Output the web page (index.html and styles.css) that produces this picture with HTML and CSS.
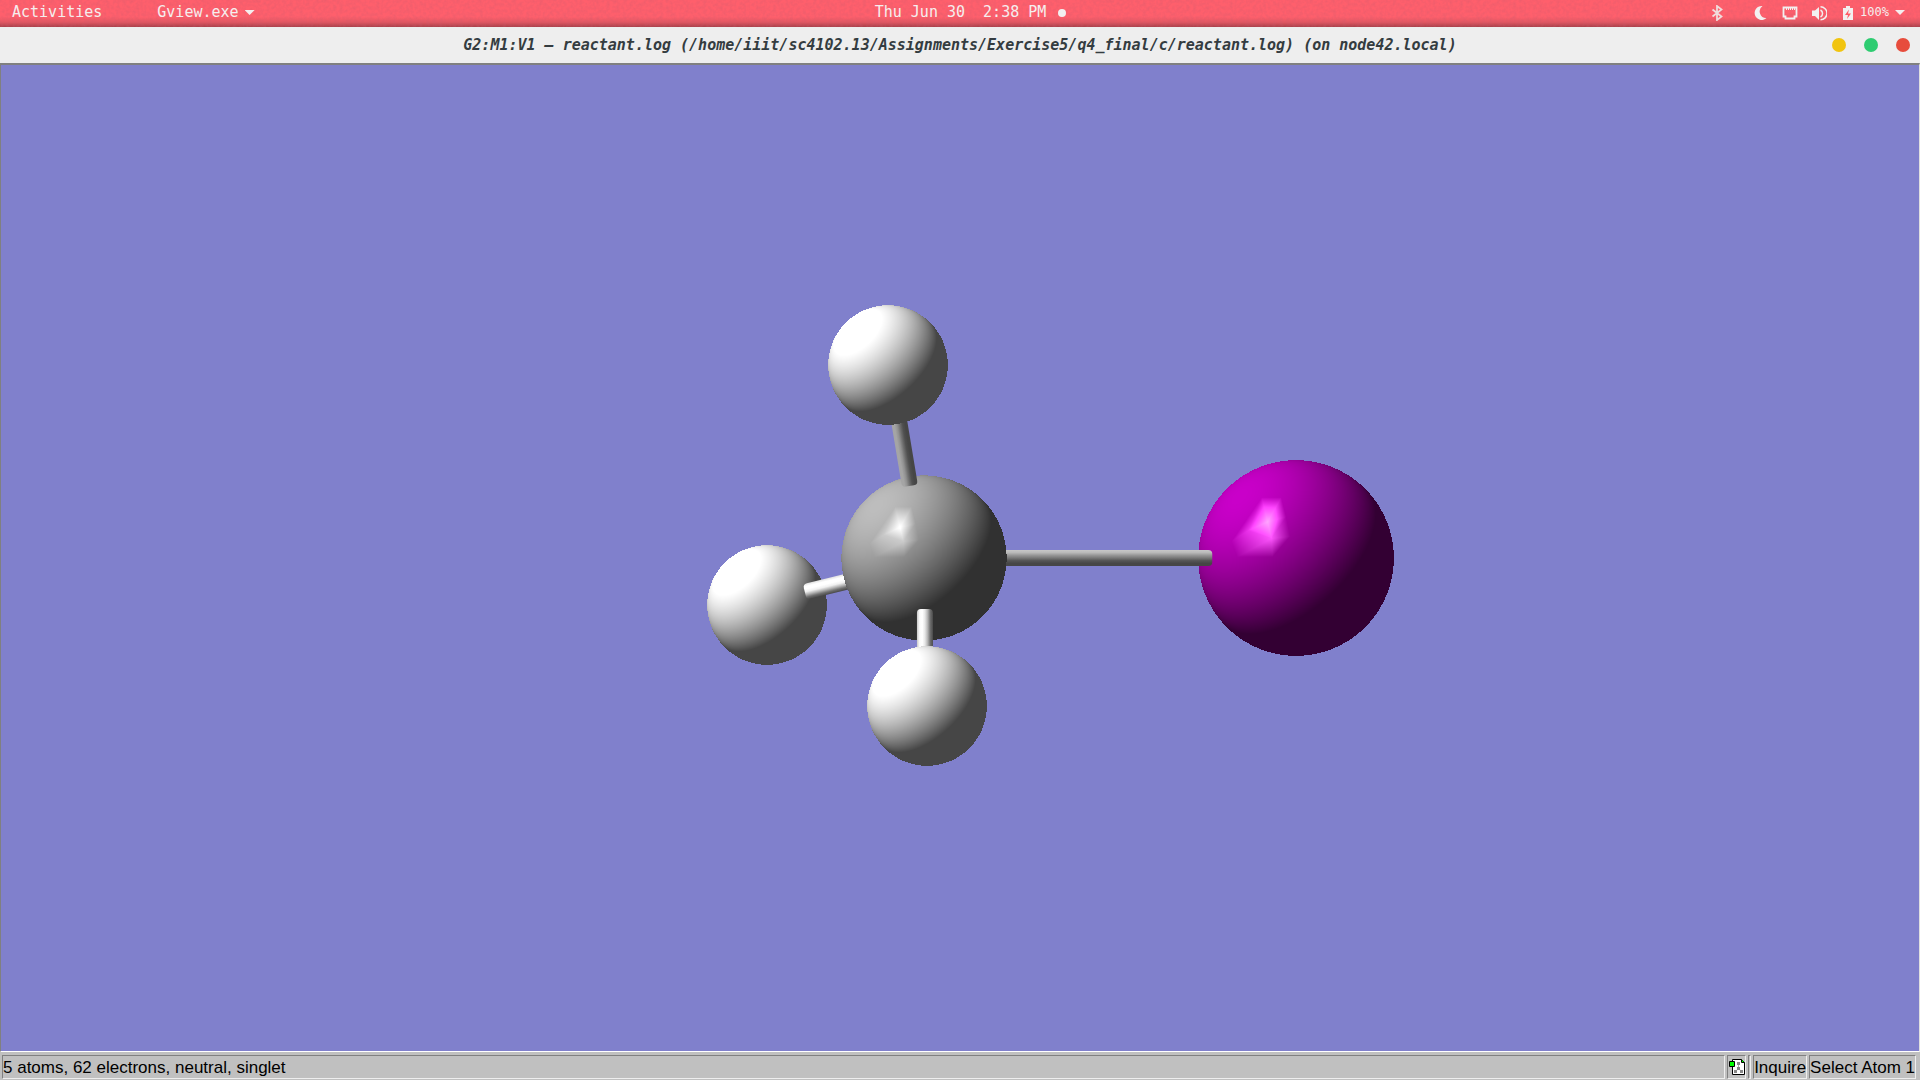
FILE: index.html
```html
<!DOCTYPE html>
<html lang="en">
<head>
<meta charset="utf-8">
<title>G2:M1:V1 – reactant.log</title>
<link rel="stylesheet" href="styles.css">
</head>
<body>
<header class="panel">
  <svg class="panel-grain" aria-hidden="true">
    <filter id="grain" x="0" y="0" width="100%" height="100%">
      <feTurbulence type="fractalNoise" baseFrequency="0.3" numOctaves="2" seed="4"/>
      <feColorMatrix values="0 0 0 0 0.6  0 0 0 0 0.1  0 0 0 0 0.15  0.6 0 0 0 -0.2"/>
    </filter>
    <rect width="100%" height="100%" filter="url(#grain)"/>
  </svg>
  <nav class="panel-side">
    <button class="panel-item">Activities</button>
    <button class="panel-item">Gview.exe<span class="caret"></span></button>
  </nav>
  <button class="panel-item clock">Thu Jun 30&nbsp; 2:38 PM<span class="dot"></span></button>
  <div class="panel-side tray">
    <svg class="tray-icon bluetooth" viewBox="0 0 16 16" aria-label="Bluetooth"><path d="M3.500 4.500l9 7-4.500 3.500v-14l4.500 3.500-9 7" fill="none" stroke="#f0dcdc" stroke-width="1.800"/></svg>
    <svg class="tray-icon" viewBox="0 0 16 16" aria-label="Night mode"><path d="M9.500 1A7 7 0 1 0 13.500 13 6.600 6.600 0 0 1 9.500 1z" fill="#f2f0f0"/></svg>
    <svg class="tray-icon" viewBox="0 0 16 16" aria-label="Wired network"><path d="M1.500 2.500h13v9h-2v2h-9v-2h-2z" fill="none" stroke="#f2f0f0" stroke-width="1.800"/><path d="M4.500 2v3M6.500 2v3M8.500 2v3M10.500 2v3M12.500 2v3" stroke="#f2f0f0"/></svg>
    <svg class="tray-icon" viewBox="0 0 16 16" aria-label="Volume"><path d="M1 5.500h3L8 2v13l-4-4H1z" fill="#f2f0f0"/><path d="M9.500 5a4 4 0 0 1 0 7M9.500 1.800a6.500 6.500 0 0 1 0 13" fill="none" stroke="#f2f0f0" stroke-width="1.500"/></svg>
    <svg class="tray-icon" viewBox="0 0 16 16" aria-label="Battery charging"><path d="M3 3h3V1h4v2h3v12H3z" fill="#f2f0f0"/><path d="M9 4.500L5 10h3l-1 4 4-5.500H8z" fill="#ff5a66"/></svg>
    <span class="battery">100%</span><span class="caret"></span>
  </div>
</header>

<main class="window">
  <div class="titlebar">
    <h1 class="title">G2:M1:V1 – reactant.log (/home/iiit/sc4102.13/Assignments/Exercise5/q4_final/c/reactant.log) (on node42.local)</h1>
    <div class="window-buttons">
      <button class="window-button minimize" aria-label="Minimize"></button>
      <button class="window-button maximize" aria-label="Maximize"></button>
      <button class="window-button close" aria-label="Close"></button>
    </div>
  </div>
  <div class="view"><canvas class="molecule" role="img" aria-label="Ball and stick model of iodomethane"></canvas></div>
  <footer class="statusbar">
    <span class="cell summary">5 atoms, 62 electrons, neutral, singlet</span>
    <button class="cell icon-cell" aria-label="Molecule file">
      <svg class="file-icon" viewBox="0 0 16 18"><path d="M3.500 1.500h9l3 3v12h-12z" fill="#fff" stroke="#000"/><path d="M12.500 1.500v3h3" fill="#0f0" stroke="#000"/><path d="M9.500 5v6M9.500 10l-3 4M9.500 10l3 4" stroke="#aaa"/><path d="M8 4h3v3H8zM8 9h3v3H8zM5 12h3v3H5zM11 12h3v3h-3z" fill="#888"/><path d="M.5 3.500h5v5h-5z" fill="#0f0" stroke="#000"/></svg>
    </button>
    <span class="cell sliver"></span>
    <span class="cell">Inquire</span>
    <span class="cell mode">Select Atom 1</span>
  </footer>
</main>
<script src="molecule.js"></script>
</body>
</html>
```
FILE: styles.css
```css
* { box-sizing: border-box; }
html, body { height: 100%; }
body {
  margin: 0;
  display: flex;
  flex-direction: column;
  overflow: hidden;
  background: #c0c0c0;
}
button {
  border: 0;
  padding: 0;
  background: none;
  color: inherit;
  font: inherit;
}
.panel {
  position: relative;
  flex: none;
  display: flex;
  align-items: center;
  height: 27px;
  padding: 0 12px 2px;
  background: linear-gradient(#ff5f6c 0, #ff5f6c 62%, #e25762 82%, #a8404a 100%);
  color: #f5eeee;
  font: 15px/25px "DejaVu Sans Mono", monospace;
}
.panel-grain {
  position: absolute;
  inset: 0;
  width: 100%;
  height: 100%;
}
.panel-side {
  position: relative;
  flex: 1;
  display: flex;
  align-items: center;
  gap: 55px;
}
.panel-item {
  position: relative;
  display: flex;
  align-items: center;
}
.caret {
  width: 10px;
  height: 5px;
  margin-left: 6px;
  background: #f5eeee;
  clip-path: polygon(0 0, 100% 0, 50% 100%);
}
.clock { padding-left: 24px; }
.dot {
  width: 8px;
  height: 8px;
  margin-left: 12px;
  border-radius: 50%;
  background: #f2f0f0;
}
.tray {
  justify-content: flex-end;
  gap: 13px;
  padding-right: 3px;
}
.tray-icon {
  width: 16px;
  height: 16px;
}
.bluetooth { margin-right: 15px; }
.battery {
  font-size: 12px;
  margin-left: -9px;
}
.tray .caret { margin-left: -7px; }
.window {
  flex: 1;
  min-height: 0;
  display: flex;
  flex-direction: column;
}
.titlebar {
  flex: none;
  display: grid;
  grid-template-columns: 1fr auto 1fr;
  align-items: center;
  height: 36px;
  padding: 0 10px;
  background: #eee;
}
.title {
  grid-column: 2;
  margin: 0;
  color: #343c40;
  font: italic bold 15px/36px "DejaVu Sans Mono", monospace;
  white-space: nowrap;
}
.window-buttons {
  display: flex;
  justify-content: flex-end;
  gap: 18px;
}
.window-button {
  width: 14px;
  height: 14px;
  border-radius: 50%;
}
.minimize { background: #f1c40f; }
.maximize { background: #2ecc71; }
.close { background: #e74c3c; }
.view {
  flex: 1;
  min-height: 0;
  border: solid #808080;
  border-width: 2px 0 0 1px;
  border-right: 1px solid #dfdfdf;
  border-bottom: 1px solid #fff;
  background: #8080cc;
}
.molecule {
  display: block;
  width: 100%;
  height: 100%;
}
.statusbar {
  flex: none;
  display: flex;
  gap: 2px;
  height: 28px;
  padding: 3px 4px 1px 2px;
  background: #c0c0c0;
  color: #000;
  font: 17px/24px "Liberation Sans", Arial, sans-serif;
}
.cell {
  border: 1px solid;
  border-color: #808080 #eee #eee #808080;
  white-space: nowrap;
}
.summary { flex: 1; }
.icon-cell {
  width: 19px;
  display: flex;
  justify-content: center;
  align-items: center;
}
.file-icon {
  flex: none;
  width: 16px;
  height: 18px;
}
.sliver { width: 3px; }
```
FILE: molecule.js
```js
const BACKGROUND_HEIGHT = 985;
const LIGHT = [-0.58, -0.63, 0.52];

// Positions are relative to the centre of the view.
const hydrogen = { r: 59.7, ambient: [70, 70, 70], diffuse: [212, 212, 212], shine: 0 };
const atoms = {
  hTop: { ...hydrogen, x: -72, y: -193 },
  hLeft: { ...hydrogen, x: -193, y: 47 },
  hBottom: { ...hydrogen, x: -33, y: 148 },
  carbon: { x: -36, y: 0, r: 82.5, ambient: [49, 49, 49], diffuse: [140, 140, 140], shine: 0.55 },
  iodine: { x: 335, y: 0, r: 97.7, ambient: [51, 0, 51], diffuse: [150, 0, 150], shine: 1 }
};

// Highlight facets: vertex = [x, y, intensity] in units of the radius.
const A = [-0.29, -0.37, 165], B = [-0.25, -0.2, 85], C = [-0.49, -0.28, 50];
const P1 = [-0.66, -0.17, 0], P2 = [-0.35, -0.62, 0], P3 = [-0.15, -0.62, 0];
const P4 = [-0.1, -0.42, 0], P5 = [-0.06, -0.22, 0], P6 = [-0.24, -0.01, 0], P7 = [-0.6, -0.01, 0];
const facets = [[A, B, C], [A, C, P2], [A, P2, P3], [A, P3, P4], [A, P4, B], [B, P4, P5],
  [B, P5, P6], [B, P6, P7], [B, P7, C], [C, P7, P1], [C, P1, P2]];

function highlight(x, y) {
  for (const [a, b, c] of facets) {
    const d = (b[1] - c[1]) * (a[0] - c[0]) + (c[0] - b[0]) * (a[1] - c[1]);
    const u = ((b[1] - c[1]) * (x - c[0]) + (c[0] - b[0]) * (y - c[1])) / d;
    const v = ((c[1] - a[1]) * (x - c[0]) + (a[0] - c[0]) * (y - c[1])) / d;
    const w = 1 - u - v;
    if (u >= 0 && v >= 0 && w >= 0) return u * a[2] + v * b[2] + w * c[2];
  }
  return 0;
}

function drawAtom(ctx, atom, scale) {
  const r = atom.r * scale;
  const size = Math.ceil(2 * r);
  const centre = size / 2;
  const tile = document.createElement("canvas");
  tile.width = tile.height = size;
  const tctx = tile.getContext("2d");
  const image = tctx.createImageData(size, size);
  for (let py = 0; py < size; py++) {
    for (let px = 0; px < size; px++) {
      const x = (px + 0.5 - centre) / r, y = (py + 0.5 - centre) / r;
      const d = x * x + y * y;
      if (d > 1) continue;
      const lit = Math.max(0, x * LIGHT[0] + y * LIGHT[1] + Math.sqrt(1 - d) * LIGHT[2]);
      const spec = highlight(x, y) * atom.shine;
      const i = (py * size + px) * 4;
      for (let k = 0; k < 3; k++) image.data[i + k] = atom.ambient[k] + atom.diffuse[k] * lit + spec;
      image.data[i + 3] = 255;
    }
  }
  tctx.putImageData(image, 0, 0);
  const left = Math.round((atom.x - atom.r) * scale) / scale;
  const top = Math.round((atom.y - atom.r) * scale) / scale;
  ctx.drawImage(tile, left, top, size / scale, size / scale);
}

// A bond runs from (x1, y1) to (x2, y2); its shades go across from left to right of that direction.
function drawBond(ctx, x1, y1, x2, y2, shades) {
  const length = Math.hypot(x2 - x1, y2 - y1);
  ctx.save();
  ctx.translate(x1, y1);
  ctx.rotate(Math.atan2(y2 - y1, x2 - x1));
  const fill = ctx.createLinearGradient(0, -8, 0, 8);
  shades.forEach((g, i) => fill.addColorStop(i / (shades.length - 1), `rgb(${g},${g},${g})`));
  ctx.fillStyle = fill;
  ctx.beginPath();
  ctx.roundRect(0, -8, length, 16, [0, 4, 4, 0]);
  ctx.fill();
  ctx.restore();
}

function draw() {
  const canvas = document.querySelector(".molecule");
  canvas.width = canvas.clientWidth;
  canvas.height = canvas.clientHeight;
  const ctx = canvas.getContext("2d");
  const scale = canvas.height / BACKGROUND_HEIGHT;
  ctx.translate(Math.round(canvas.width / 2), Math.round(canvas.height / 2));
  ctx.scale(scale, scale);
  drawAtom(ctx, atoms.iodine, scale);
  drawBond(ctx, 30, 0, 252, 0, [200, 185, 150, 120, 85, 70, 70]);
  drawAtom(ctx, atoms.hLeft, scale);
  drawBond(ctx, -90, 18, -155, 34, [70, 110, 180, 240, 255, 255, 225]);
  drawAtom(ctx, atoms.carbon, scale);
  drawBond(ctx, -63, -150, -50, -72, [70, 70, 80, 110, 145, 165, 165]);
  drawAtom(ctx, atoms.hTop, scale);
  drawBond(ctx, -35, 100, -35, 51, [200, 250, 255, 230, 180, 110, 75]);
  drawAtom(ctx, atoms.hBottom, scale);
}

window.addEventListener("resize", draw);
draw();
```
